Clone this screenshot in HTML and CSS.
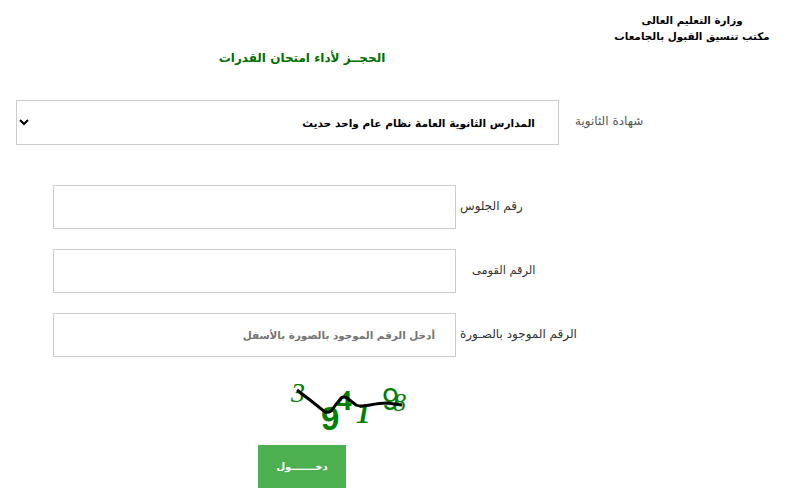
FILE: index.html
```html
<!DOCTYPE html>
<html lang="ar">
<head>
    <meta charset="UTF-8">
    <meta name="viewport" content="width=device-width, initial-scale=1.0">
    <title>الحجز لأداء امتحان القدرات</title>
    <link rel="stylesheet" href="styles.css">
</head>
<body>
    <header class="top">
        <h1 class="page-title">الحجــز لأداء امتحان القدرات</h1>
        <div class="ministry">
            وزارة التعليم العالى<br>
            مكتب تنسيق القبول بالجامعات
        </div>
    </header>

    <form class="booking">
        <div class="row-select">
            <select class="cert" dir="rtl">
                <option>المدارس الثانوية العامة نظام عام واحد حديث</option>
            </select>
            <label class="label-cert">شهادة الثانوية</label>
        </div>

        <div class="field">
            <input type="text" class="box" dir="rtl">
            <label class="field-label">رقم الجلوس</label>
        </div>
        <div class="field">
            <input type="text" class="box" dir="rtl">
            <label class="field-label field-label-mid">الرقم القومى</label>
        </div>
        <div class="field">
            <input type="text" class="box" dir="rtl" placeholder="أدخل الرقم الموجود بالصورة بالأسفل">
            <label class="field-label">الرقم الموجود بالصـورة</label>
        </div>

        <svg class="captcha" width="125" height="64" viewBox="0 0 125 64">
            <g fill="#008000" font-family="Liberation Serif, serif">
                <text x="1" y="30" font-size="28" font-style="italic">3</text>
                <text x="31" y="58" font-size="33" font-weight="bold" font-family="Liberation Sans, sans-serif">9</text>
                <text x="47" y="38" font-size="30" font-weight="bold" font-family="Liberation Serif, serif">4</text>
                <text x="66" y="51" font-size="29" font-style="italic" font-weight="bold">1</text>
                <text x="92" y="38" font-size="31" font-family="Liberation Sans, sans-serif">9</text>
                <text x="103" y="39" font-size="26" font-style="italic">8</text>
            </g>
            <path d="M7 18 L20 28 L35 40 Q38 41 41 39 L51 26 Q54 24 57 26 L66 33 Q70 35 80 33 Q90 31 97 31 L112 33" fill="none" stroke="#000" stroke-width="3"/>
        </svg>

        <button type="button" class="enter">دخـــــــول</button>
    </form>
</body>
</html>
```

FILE: styles.css
```css
body {
    margin: 0;
    font-family: "DejaVu Sans", sans-serif;
    background-color: #fff;
    color: #333;
}

.top {
    display: flex;
    height: 100px;
}

.page-title {
    width: 604px;
    margin: 0;
    padding-top: 51px;
    font-size: 12px;
    font-weight: bold;
    text-align: center;
    color: #006f00;
}

.ministry {
    width: 176px;
    padding-top: 12px;
    font-size: 10.4px;
    font-weight: bold;
    line-height: 16px;
    text-align: center;
    color: #000;
}

.booking {
    padding-left: 16px;
}

.row-select {
    display: flex;
    align-items: center;
    margin-bottom: 40px;
}

.cert {
    width: 543px;
    height: 45px;
    padding: 0 19px 0 24px;
    border: 1px solid #ccc;
    background-color: #fff;
    font-family: inherit;
    font-size: 10.6px;
    font-weight: bold;
    color: #000;
}

.label-cert {
    margin-left: 16px;
    padding-bottom: 3px;
    font-size: 12px;
    color: #555;
}

.field {
    display: flex;
    align-items: center;
    height: 44px;
    margin-bottom: 20px;
    margin-left: 37px;
}

.box {
    box-sizing: border-box;
    width: 403px;
    height: 44px;
    padding: 0 20px;
    border: 1px solid #ccc;
    font-family: inherit;
    font-size: 10.4px;
    font-weight: bold;
}

.box::placeholder {
    color: #757575;
}

.field-label {
    margin-left: 4px;
    padding-bottom: 2px;
    font-size: 12px;
}

.field-label-mid {
    margin-left: 16px;
    font-size: 11.4px;
}

.captcha {
    display: block;
    margin: -5px 0 0 274px;
}

.enter {
    display: block;
    width: 88px;
    height: 43px;
    margin: 9px 0 0 242px;
    border: none;
    background-color: #4CAF50;
    color: #fff;
    font-family: inherit;
    font-size: 10px;
    font-weight: bold;
}
```
